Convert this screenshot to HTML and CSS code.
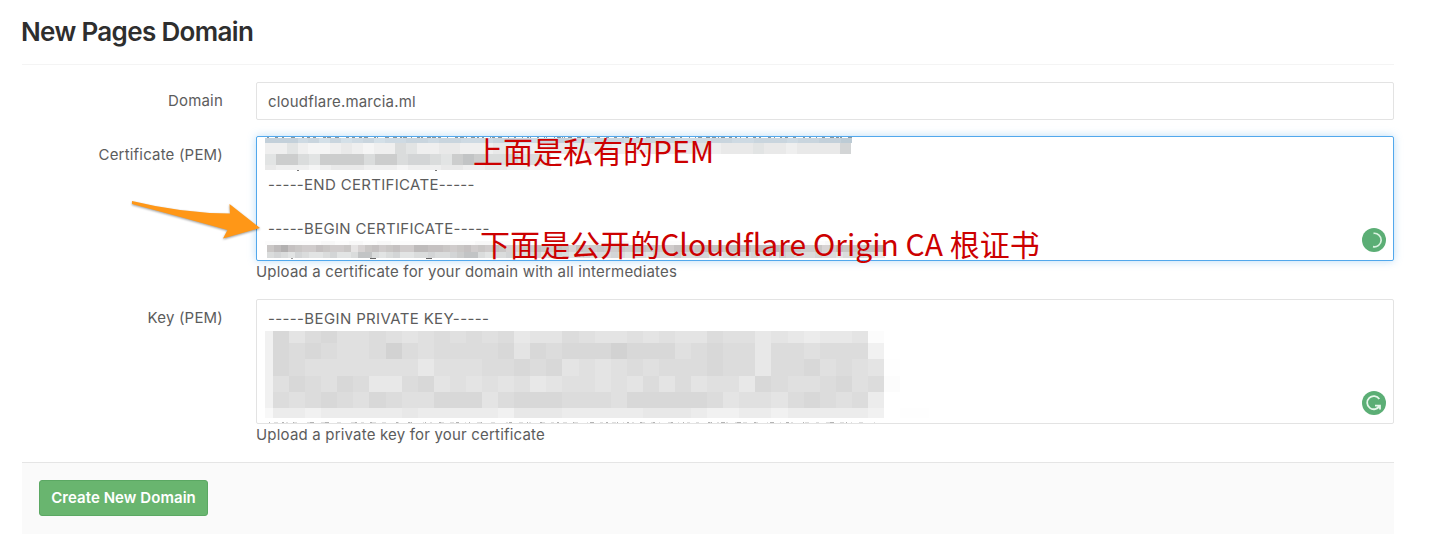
FILE: index.html
```html
<!DOCTYPE html>
<html lang="en">
<head>
<meta charset="utf-8">
<title>New Pages Domain</title>
<link rel="stylesheet" href="styles.css">
</head>
<body>
<main class="page">
  <h1 class="title">New Pages Domain</h1>
  <form class="form">
    <div class="row row-domain">
      <label class="label">Domain</label>
      <div class="field input">cloudflare.marcia.ml</div>
    </div>
    <div class="row row-cert">
      <label class="label">Certificate (PEM)</label>
      <div class="col">
        <div class="field area focused">
          <svg class="mosaic" id="cert-mosaic" width="1136" height="123"></svg>
          <p class="line line-end">-----END CERTIFICATE-----</p>
          <p class="line line-begin">-----BEGIN CERTIFICATE-----</p>
          <svg class="badge" width="24" height="24" viewBox="0 0 24 24"><circle cx="12" cy="12" r="12" fill="#5bae75"/><path d="M11.5 5.3A6.8 6.8 0 1 1 11 18.7" fill="none" stroke="#d9f2e0" stroke-width="1.7"/></svg>
        </div>
        <p class="help">Upload a certificate for your domain with all intermediates</p>
        <div class="note note-private">上面是私有的PEM</div>
        <div class="note note-public">下面是公开的Cloudflare Origin CA 根证书</div>
        <svg class="arrow" width="140" height="52" viewBox="0 0 140 52"><path d="M6 6Q55 18 104 18.6L103.5 9L134 33L97 43.5L101.5 35Q55 22 6 9Z" fill="#ff9717"/></svg>
      </div>
    </div>
    <div class="row row-key">
      <label class="label">Key (PEM)</label>
      <div class="col">
        <div class="field area">
          <svg class="mosaic" id="key-mosaic" width="1136" height="123"></svg>
          <p class="line line-key">-----BEGIN PRIVATE KEY-----</p>
          <svg class="badge" width="24" height="24" viewBox="0 0 24 24"><circle cx="12" cy="12" r="12" fill="#5bae75"/><path d="M17.3 8A6.6 6.6 0 1 0 17.6 14.8M13 14.6H18V18.6" fill="none" stroke="#e6f7eb" stroke-width="1.8"/></svg>
        </div>
        <p class="help">Upload a private key for your certificate</p>
      </div>
    </div>
    <div class="actions"><button type="button" class="create">Create New Domain</button></div>
  </form>
</main>
<script src="mosaic.js"></script>
</body>
</html>
```
FILE: styles.css
```css
* { box-sizing: border-box; }
body { margin: 0; background: #fff; color: #5c5c5c; font: 15px/22px Inter, "Liberation Sans", sans-serif; letter-spacing: .19px; }
p { margin: 0; }
.page { width: 1372px; margin-left: 22px; }
.title { margin: 0; height: 65px; padding-top: 16px; border-bottom: 1px solid #f4f4f4; color: #2e2e2e; font-size: 26px; line-height: 32px; font-weight: 600; letter-spacing: -.66px; text-indent: -1px; }
.row { display: grid; grid-template-columns: 201px 1138px; column-gap: 33px; }
.row-domain { padding-top: 17px; height: 71px; }
.row-cert { height: 163px; }
.row-key { height: 163px; }
.label { padding-top: 8px; text-align: right; }
.col { position: relative; }
.field { border: 1px solid #e3e3e3; border-radius: 2px; background: #fff; }
.input { height: 38px; padding: 8px 11px; }
.area { position: relative; height: 125px; overflow: hidden; }
.focused { border-color: #52a8ec; box-shadow: 0 0 8px rgba(82, 168, 236, .4); }
.mosaic { position: absolute; left: 0; top: 0; }
.line { padding-left: 11px; height: 22px; white-space: nowrap; letter-spacing: .31px; }
.line-end { margin-top: 37px; }
.line-begin { margin-top: 22px; }
.line-key { margin-top: 8px; letter-spacing: .37px; }
.help { white-space: nowrap; line-height: 21px; }
.badge { position: absolute; right: 7px; top: 91px; }
.note { position: absolute; color: #c00; font: 30px/36px "Noto Sans CJK SC", sans-serif; letter-spacing: 0; white-space: nowrap; }
.note-private { left: 217px; top: -4px; }
.note-public { left: 224px; top: 89px; letter-spacing: .03px; }
.arrow { position: absolute; left: -130px; top: 59px; filter: drop-shadow(0 1px 1px rgba(0, 0, 0, .4)); }
.actions { height: 72px; padding: 17px; border-top: 1px solid #e5e5e5; background: #fafafa; }
.create { display: block; width: 169px; height: 36px; padding: 0; border: 1px solid #5ba863; border-radius: 3px; background: #69b56f; color: #fff; font: 600 15px/22px Inter, sans-serif; letter-spacing: .06px; }
```
FILE: mosaic.js
```js
const NS = 'http://www.w3.org/2000/svg';
const GREYS = ['#d2d2d2', '#d8d8d8', '#dcdcdc', '#e0e0e0', '#e4e4e4', '#e8e8e8', '#ececec', '#f1f1f1', '#f8f8f8', '#fcfcfc'];
const COOL = ['#b5b5b5', '#c2c4c5', '#cccdcd', '#d3d5d6', '#dadcdc', '#e2e4e4', '#e9e9e9', '#efefef', '#f5f5f5', '#fbfbfb'];
const BLUE = ['#b6c4ce', '#bccbd5', '#c3d0da', '#c9d5de', '#cedae3', '#d4e0e8', '#dbe5ec', '#e2eaf0', '#edf3f7', '#f7fafc'];
const WARM = ['#b2b0b0', '#bebbbb', '#c5c1c1', '#cac7c6', '#d0cccc', '#d7d3d3', '#dedbdb', '#e6e4e4', '#efeded', '#f8f8f8'];

function rect(svg, x, y, w, h, fill) {
  const r = document.createElementNS(NS, 'rect');
  Object.entries({ x, y, width: w, height: h, fill, 'shape-rendering': 'crispEdges' }).forEach(([k, v]) => r.setAttribute(k, v));
  svg.appendChild(r);
}
function band(svg, x, y, size, h, levels, palette) {
  [...levels].forEach((c, i) => {
    const a = Math.round(x + i * size), b = Math.round(x + (i + 1) * size);
    rect(svg, a, y, b - a, h, palette[+c]);
  });
}
function specks(svg, x, end, y, fill, seed, gap) {
  let s = seed;
  while (x < end) {
    s = (s * 73 + 41) % 997;
    const w = 1 + s % 4;
    rect(svg, x, y, w, 1, fill);
    x += w + gap + s % 7;
  }
}

const cert = document.getElementById('cert-mosaic');
band(cert, 8, 1, 10.87, 5, '222435354354433433444334433234333443334443344333433221', BLUE);
band(cert, 8, 6, 10.85, 11, '775788767877457766777667776666667776666657666566766663', COOL);
band(cert, 8, 17, 11, 11, '52245222242243345212443546', COOL);
band(cert, 8, 28, 11, 5, '67778766677787776677667788', COOL);
specks(cert, 10, 596, 0, '#8a979f', 17, 1);
rect(cert, 40, 33, 2, 1, '#777');
rect(cert, 178, 33, 2, 1, '#777');
band(cert, 8, 104, 14, 4, '99998989899999988989999898999998989989998988', GREYS);
band(cert, 10, 108, 7.02, 7, '3102344234437532432441122343243423553423423523434434223344233212232224221233443542333221', WARM);
band(cert, 10, 115, 7.02, 6, '4345345543554114543554434432114544354435434543544345445344244335543443445234443445433456', COOL);
rect(cert, 34, 121, 2, 1, '#999');
rect(cert, 113, 121, 6, 1, '#666');
rect(cert, 169, 121, 6, 1, '#666');

const key = document.getElementById('key-mosaic');
[
  [31, 12, '1421332343232325442', '3443434423354565549'],
  [43, 16, '1212332023222214121', '1101113212252232227'],
  [59, 17, '1233333335333221214', '3432322212252213234'],
  [76, 16, '3123125521434343543', '3434242433512332132'],
  [92, 16, '2321231233111421112', '2231111124334212326'],
  [108, 10, '6676666656666675556', '6666555677667666667']
].forEach(([y, h, left, right]) => band(key, 16, y, 16.08, h, left + right, GREYS));
rect(key, 8, 31, 8, 77, '#f1f1f1');
rect(key, 8, 108, 8, 10, '#f8f8f8');
rect(key, 627, 59, 16, 17, '#fefefe');
rect(key, 627, 76, 16, 16, '#fcfcfc');
rect(key, 643, 108, 29, 10, '#fefefe');
specks(key, 12, 618, 122, '#b4b4b4', 29, 9);
specks(key, 17, 618, 122, '#dedede', 53, 6);
```
